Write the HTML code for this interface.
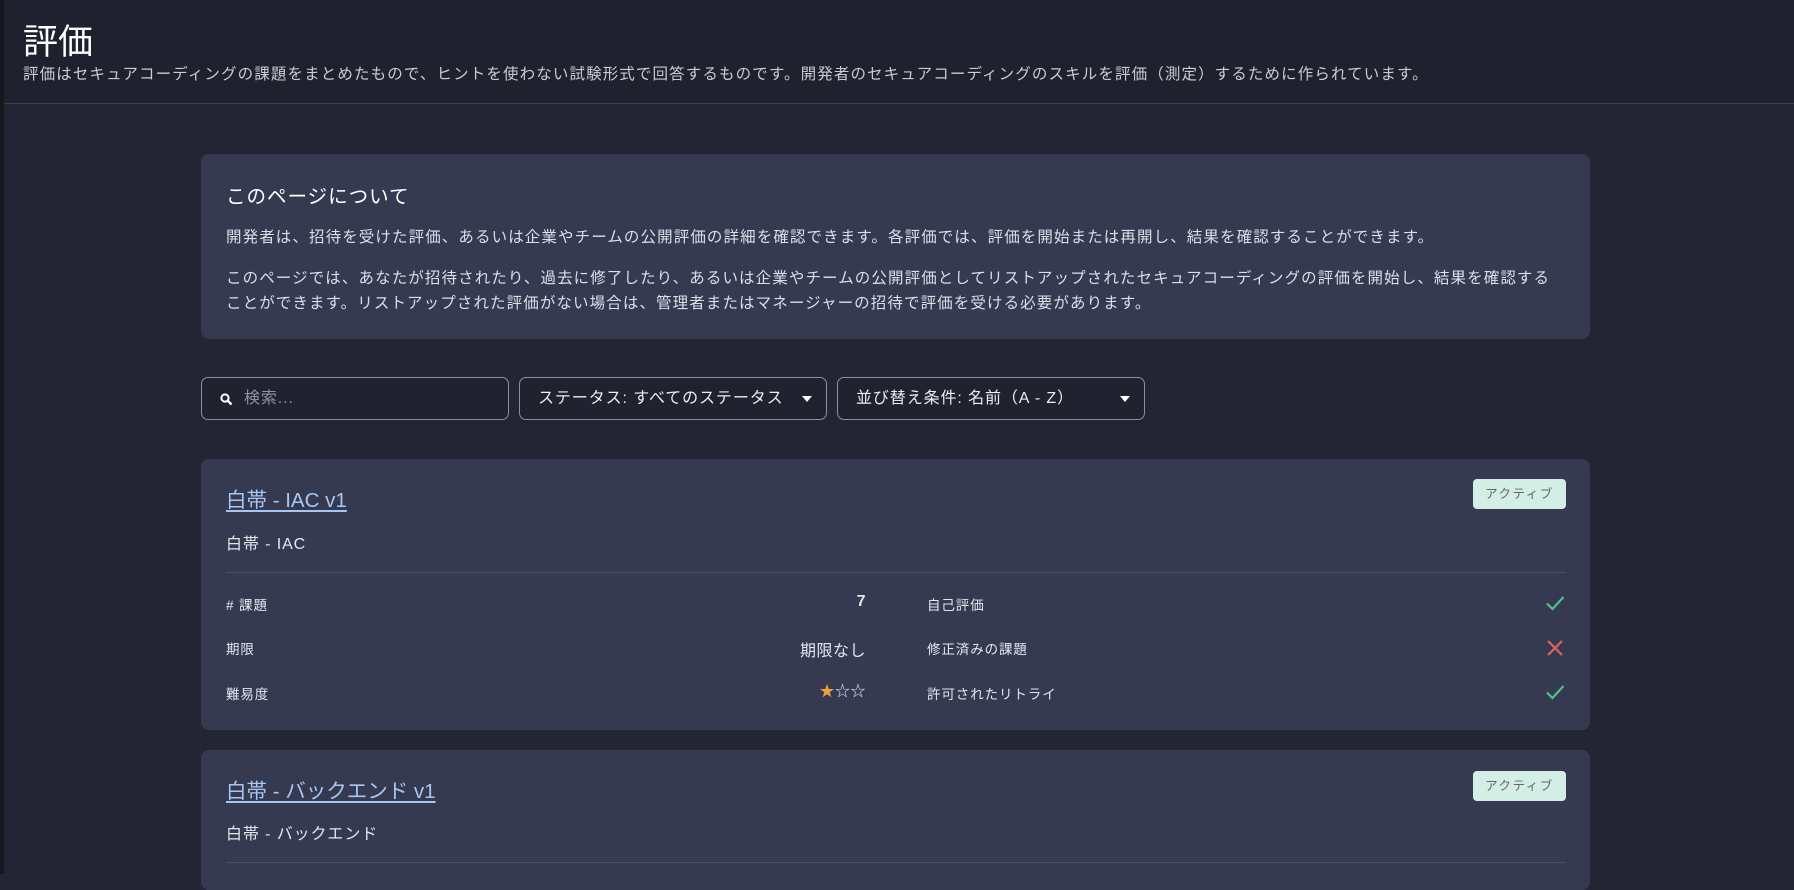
<!DOCTYPE html>
<html><head><meta charset="utf-8"><style>
*{margin:0;padding:0;box-sizing:border-box}
body{width:1794px;height:874px;overflow:hidden;background:#232534;font-family:"Liberation Sans","Noto Sans CJK JP",sans-serif;color:#e4e6ee;position:relative;letter-spacing:0.9px}
.strip{position:absolute;left:0;top:0;width:4px;height:874px;background:#15161e}
.hdr{position:absolute;left:4px;top:0;right:0;height:104px;border-bottom:1px solid #3a3d50;background:#20212e}
.hdr h1{position:absolute;left:19px;top:14px;font-size:35px;font-weight:400;color:#fff;letter-spacing:0}
.hdr p{position:absolute;left:19px;top:62px;font-size:15.5px;color:#c9cbd6;letter-spacing:1.12px;white-space:nowrap}
.card{position:absolute;left:201px;width:1389px;background:#363a51;border-radius:8px}
.info h2{position:absolute;left:25px;top:26px;font-size:19.5px;font-weight:400;color:#fff;letter-spacing:1px}
.info p{position:absolute;left:25px;font-size:15.5px;line-height:25px;color:#dcdee8;width:1360px;letter-spacing:1.1px;white-space:nowrap}
.ctl{position:absolute;top:377px;height:43px;border:1px solid #8a8ea6;border-radius:7px;background:#20222f;font-size:16px;line-height:41px;padding-left:18px;color:#eceef5}
.ctl .ar{position:absolute;right:14px;top:18px;width:0;height:0;border-left:5px solid transparent;border-right:5px solid transparent;border-top:6px solid #fff}
.t{position:absolute;left:25px;font-size:20.5px;color:#a8c6f2;text-decoration:underline;text-underline-offset:3px;letter-spacing:0}
.sub{position:absolute;left:25px;font-size:16px;color:#e4e6ee}
.badge{position:absolute;left:1272px;width:93px;height:30px;background:#d3eee5;border-radius:4px;color:#666;font-size:12.5px;text-align:center;line-height:30px;letter-spacing:1.5px}
.div{position:absolute;left:25px;width:1340px;height:1px;background:#4a4e65}
.lb{position:absolute;font-size:13.5px;color:#e4e6ee}
.v{position:absolute;right:724px;font-size:16px;color:#e4e6ee;text-align:right;letter-spacing:0.5px}
.ic{position:absolute;left:1343px;width:22px;height:22px}
</style></head><body>
<div class="strip"></div>
<div class="hdr"><h1>評価</h1><p>評価はセキュアコーディングの課題をまとめたもので、ヒントを使わない試験形式で回答するものです。開発者のセキュアコーディングのスキルを評価（測定）するために作られています。</p></div>

<div class="card info" style="top:154px;height:185px">
<h2>このページについて</h2>
<p style="top:71px">開発者は、招待を受けた評価、あるいは企業やチームの公開評価の詳細を確認できます。各評価では、評価を開始または再開し、結果を確認することができます。</p>
<p style="top:112px">このページでは、あなたが招待されたり、過去に修了したり、あるいは企業やチームの公開評価としてリストアップされたセキュアコーディングの評価を開始し、結果を確認する<br>ことができます。リストアップされた評価がない場合は、管理者またはマネージャーの招待で評価を受ける必要があります。</p>
</div>

<div class="ctl" style="left:201px;width:308px;color:#8e91a3;padding-left:42px"><svg style="position:absolute;left:18px;top:15px" width="13" height="13" viewBox="0 0 13 13"><circle cx="5" cy="5" r="3.6" stroke="#fff" stroke-width="2" fill="none"/><path d="M7.7 7.7L11.5 11.5" stroke="#fff" stroke-width="2.4"/></svg>検索...</div>
<div class="ctl" style="left:519px;width:308px">ステータス: すべてのステータス<span class="ar"></span></div>
<div class="ctl" style="left:837px;width:308px">並び替え条件: 名前（A - Z）<span class="ar"></span></div>

<div class="card" style="top:459px;height:271px">
<div class="t" style="top:24px">白帯 - IAC v1</div>
<div class="badge" style="top:20px">アクティブ</div>
<div class="sub" style="top:71px">白帯 - IAC</div>
<div class="div" style="top:113px"></div>
<div class="lb" style="left:25px;top:135px"># 課題</div><div class="v" style="top:134px;font-weight:bold">7</div>
<div class="lb" style="left:25px;top:179px">期限</div><div class="v" style="top:178px">期限なし</div>
<div class="lb" style="left:25px;top:224px">難易度</div><div class="v" style="top:221px;font-size:15px"><span style="color:#f0a040">★</span>☆☆</div>
<div class="lb" style="left:726px;top:135px">自己評価</div>
<div class="lb" style="left:726px;top:179px">修正済みの課題</div>
<div class="lb" style="left:726px;top:224px">許可されたリトライ</div>
<svg class="ic" style="top:133px" viewBox="0 0 22 22"><path d="M3 11.5L8.5 17L19.5 5" stroke="#4fc08d" stroke-width="2.2" fill="none"/></svg>
<svg class="ic" style="top:178px" viewBox="0 0 22 22"><path d="M4 4L18 18M18 4L4 18" stroke="#e06060" stroke-width="2.2"/></svg>
<svg class="ic" style="top:222px" viewBox="0 0 22 22"><path d="M3 11.5L8.5 17L19.5 5" stroke="#4fc08d" stroke-width="2.2" fill="none"/></svg>
</div>

<div class="card" style="top:750px;height:140px">
<div class="t" style="top:24px">白帯 - バックエンド v1</div>
<div class="badge" style="top:21px">アクティブ</div>
<div class="sub" style="top:70px">白帯 - バックエンド</div>
<div class="div" style="top:112px"></div>
</div>
</body></html>
